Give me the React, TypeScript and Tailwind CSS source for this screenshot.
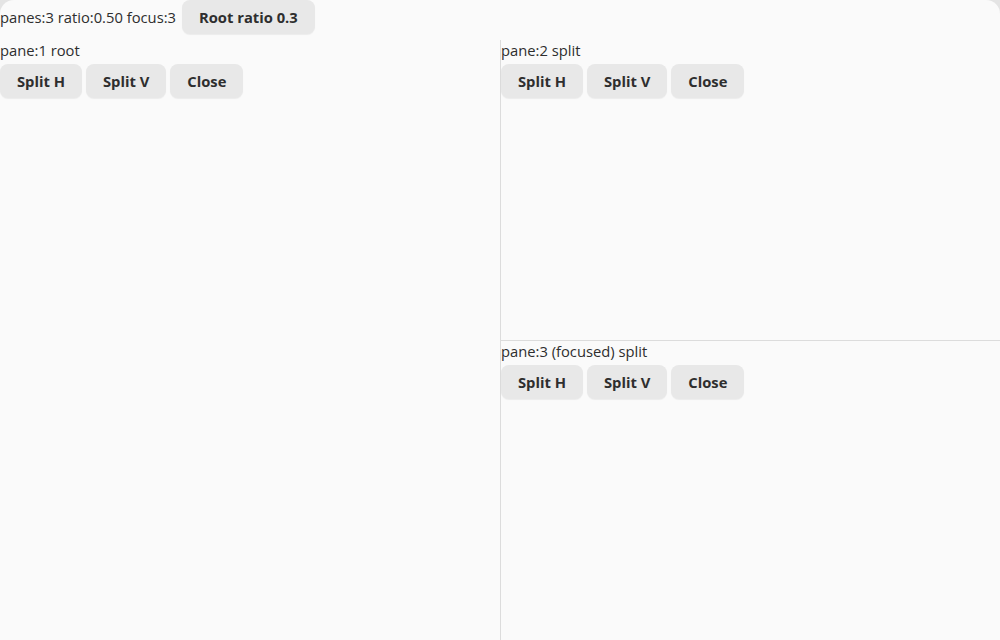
const FONT = { fontFamily: '"Open Sans", "Noto Sans", sans-serif' };

function Btn({ label }: { label: string }) {
  return (
    <button className="h-[34px] px-[17px] rounded-[8px] bg-[#e8e8e8] text-[14.75px] font-bold text-[#2e2e2e] shadow-[0_1px_1px_rgba(0,0,0,0.06)]">
      {label}
    </button>
  );
}

function Pane({ label }: { label: string }) {
  return (
    <div className="flex flex-col">
      <div className="h-[20px] leading-[20px] text-[14.75px] text-[#2e2e2e]">{label}</div>
      <div className="flex gap-[4px] mt-[4px]">
        <Btn label="Split H" />
        <Btn label="Split V" />
        <Btn label="Close" />
      </div>
    </div>
  );
}

export default function App() {
  return (
    <div className="w-[1000px] h-[640px] bg-[#e4e4e4]" style={FONT}>
      <div className="w-full h-full bg-[#fafafa] rounded-t-[14px] overflow-hidden flex flex-col">
        <div className="h-[40px] flex items-start gap-[6px] shrink-0">
          <span className="h-[34px] leading-[34px] text-[14.75px] text-[#2e2e2e]">panes:3 ratio:0.50 focus:3</span>
          <Btn label="Root ratio 0.3" />
        </div>
        <div className="flex-1 flex min-h-0">
          <div className="w-[501px] shrink-0 border-r border-[#dcdcdc]">
            <Pane label="pane:1 root" />
          </div>
          <div className="flex-1 flex flex-col">
            <div className="h-[301px] border-b border-[#dcdcdc]">
              <Pane label="pane:2 split" />
            </div>
            <div className="flex-1">
              <Pane label="pane:3 (focused) split" />
            </div>
          </div>
        </div>
      </div>
    </div>
  );
}
